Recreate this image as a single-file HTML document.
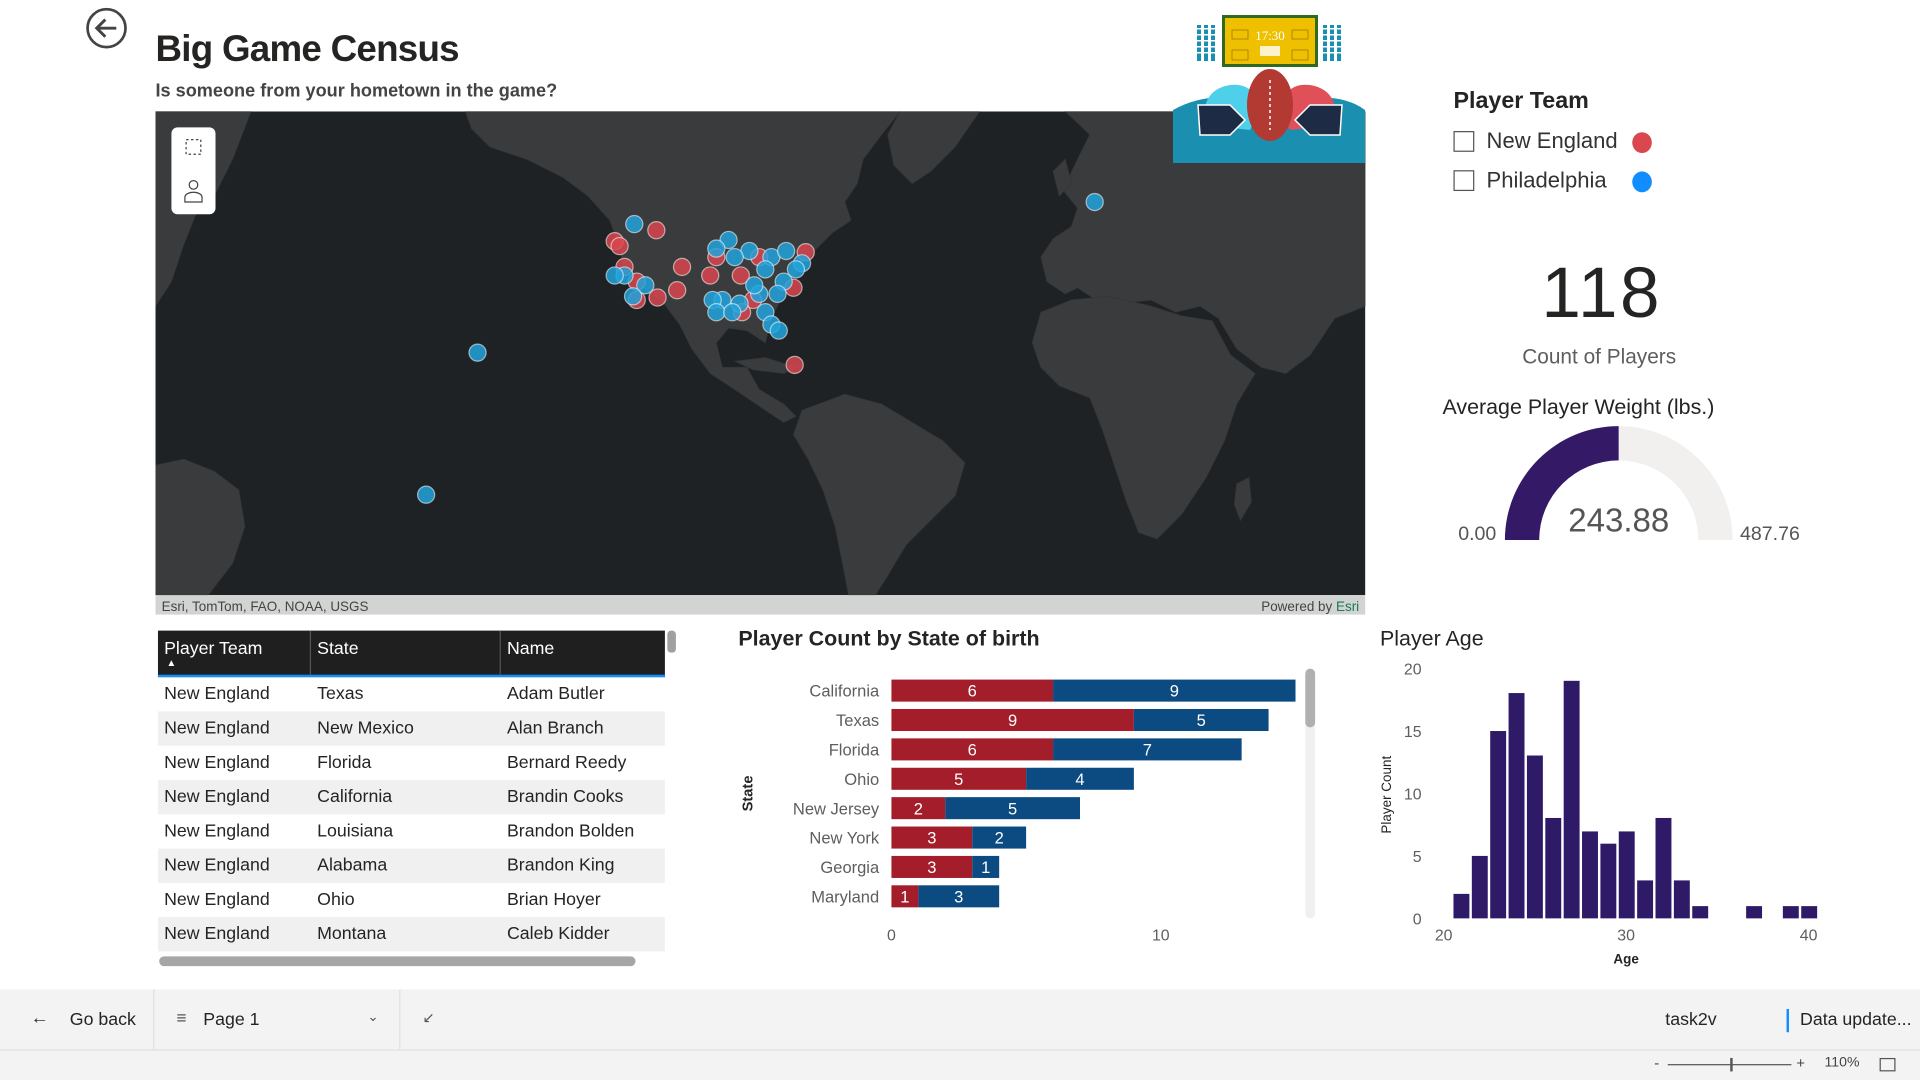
<!DOCTYPE html>
<html><head><meta charset="utf-8"><style>
html,body{margin:0;padding:0;width:1920px;height:1080px;overflow:hidden;background:#fff;font-family:"Liberation Sans",sans-serif;}
#s{position:absolute;left:0;top:0;width:1568px;height:882px;transform:scale(1.2244898);transform-origin:0 0;}
.a{position:absolute;white-space:nowrap;}
.tr{position:absolute;left:129px;width:414px;height:28px;font-size:14.5px;color:#252423;}
.tr span{position:absolute;top:6px;}
</style></head><body>
<div id="s">
<svg class="a" style="left:69px;top:5px" width="36" height="36" viewBox="0 0 36 36"><circle cx="18" cy="18" r="15.5" fill="none" stroke="#444" stroke-width="2.2"/><path d="M26 18H11M17 11l-7 7 7 7" fill="none" stroke="#444" stroke-width="2.4"/></svg>
<div class="a" style="left:127px;top:24px;font-size:30px;font-weight:bold;color:#252423;letter-spacing:-0.6px">Big Game Census</div>
<div class="a" style="left:127px;top:67px;font-size:14.8px;font-weight:bold;color:#444">Is someone from your hometown in the game?</div>

<svg class="a" style="left:127px;top:91px" width="988" height="411" viewBox="127 91 988 411">
<rect x="127" y="91" width="988" height="395" fill="#1e2225"/>
<g fill="#3a3b3c" stroke="#333638" stroke-width="0.6">
<path d="M127 91H205L190 130 175 160 160 175 150 200 140 230 127 250Z"/>
<path d="M127 380L150 375 175 385 195 400 200 430 190 460 170 486H127Z"/>
<path d="M380 91H735L720 110 705 130 700 150 690 165 695 180 680 190 670 200 655 215 640 240 630 260 625 280 610 270 595 268 585 280 590 300 610 300 620 318 640 330 650 340 640 345 625 335 600 318 580 305 565 285 555 265 540 245 525 235 510 220 505 200 498 180 480 160 460 145 430 130 400 120 385 105Z"/>
<path d="M735 91H800L780 120 760 140 745 150 730 135 725 110Z"/>
<path d="M600 295L625 292 650 300 640 305 615 302Z"/>
<path d="M655 335L690 322 720 330 745 345 770 360 788 378 780 405 760 425 740 445 725 470 715 486H693L688 460 682 430 672 400 660 375 648 355Z"/>
<path d="M870 91H1115V250L1090 260 1070 290 1050 305 1030 300 1010 285 995 260 980 250 960 255 940 245 915 248 895 245 880 235 870 240 855 230 850 210 860 195 875 185 880 170 868 155 880 130 890 110Z"/>
<path d="M850 255L875 245 905 242 940 250 965 258 990 262 1005 290 1025 305 1010 330 1000 360 985 390 965 420 945 440 930 435 920 410 910 380 900 350 890 325 865 315 850 300 843 280Z"/>
<path d="M1010 395L1020 390 1022 410 1013 425 1008 412Z"/>
<path d="M860 140L870 130 875 150 865 160Z"/>
</g>
<g stroke="#fff" stroke-opacity="0.55" stroke-width="1" fill-opacity="0.85">
<g fill="#d9474f">
<circle cx="536" cy="188" r="7"/><circle cx="502" cy="197" r="7"/><circle cx="506" cy="201" r="7"/><circle cx="557" cy="218" r="7"/><circle cx="580" cy="225" r="7"/><circle cx="510" cy="218" r="7"/><circle cx="537" cy="243" r="7"/><circle cx="553" cy="237" r="7"/><circle cx="605" cy="225" r="7"/><circle cx="585" cy="210" r="7"/><circle cx="620" cy="210" r="7"/><circle cx="658" cy="206" r="7"/><circle cx="648" cy="235" r="7"/><circle cx="615" cy="245" r="7"/><circle cx="606" cy="255" r="7"/><circle cx="520" cy="245" r="7"/><circle cx="649" cy="298" r="7"/><circle cx="520" cy="230" r="7"/>
</g>
<g fill="#22a3dc">
<circle cx="518" cy="183" r="7"/><circle cx="894" cy="165" r="7"/><circle cx="390" cy="288" r="7"/><circle cx="348" cy="404" r="7"/><circle cx="595" cy="196" r="7"/><circle cx="585" cy="203" r="7"/><circle cx="612" cy="205" r="7"/><circle cx="600" cy="210" r="7"/><circle cx="630" cy="210" r="7"/><circle cx="642" cy="205" r="7"/><circle cx="655" cy="215" r="7"/><circle cx="650" cy="220" r="7"/><circle cx="625" cy="220" r="7"/><circle cx="640" cy="230" r="7"/><circle cx="635" cy="240" r="7"/><circle cx="620" cy="240" r="7"/><circle cx="590" cy="245" r="7"/><circle cx="582" cy="245" r="7"/><circle cx="604" cy="248" r="7"/><circle cx="585" cy="255" r="7"/><circle cx="598" cy="255" r="7"/><circle cx="625" cy="255" r="7"/><circle cx="630" cy="265" r="7"/><circle cx="636" cy="270" r="7"/><circle cx="527" cy="233" r="7"/><circle cx="510" cy="225" r="7"/><circle cx="502" cy="225" r="7"/><circle cx="517" cy="242" r="7"/><circle cx="616" cy="233" r="7"/>
</g></g>
<rect x="127" y="486" width="988" height="16" fill="#d2d3d3"/>
<text x="132" y="499" font-size="11" fill="#444" font-family="Liberation Sans">Esri, TomTom, FAO, NOAA, USGS</text>
<text x="1110" y="499" font-size="11" fill="#444" text-anchor="end" font-family="Liberation Sans">Powered by <tspan fill="#1a7a5a">Esri</tspan></text>
<rect x="140" y="104" width="36" height="71" rx="5" fill="#fff"/>
<rect x="152" y="114" width="12" height="12" fill="none" stroke="#444" stroke-dasharray="2 2"/>
<circle cx="158" cy="151" r="3.5" fill="none" stroke="#444"/><path d="M151 165v-4a7 4 0 0 1 14 0v4z" fill="none" stroke="#444"/>
</svg>

<div class="a" style="left:1187px;top:72px;font-size:19px;font-weight:bold;color:#252423">Player Team</div>
<div class="a" style="left:1187px;top:107px;width:15px;height:15px;border:1px solid #555"></div>
<div class="a" style="left:1214px;top:105px;font-size:18px;color:#333">New England</div>
<div class="a" style="left:1333px;top:108px;width:16px;height:17px;border-radius:50%;background:#d9474f"></div>
<div class="a" style="left:1187px;top:139px;width:15px;height:15px;border:1px solid #555"></div>
<div class="a" style="left:1214px;top:137px;font-size:18px;color:#333">Philadelphia</div>
<div class="a" style="left:1333px;top:140px;width:16px;height:17px;border-radius:50%;background:#118dff"></div>

<div class="a" style="left:1208px;top:206px;width:200px;text-align:center;font-size:58px;color:#252423;letter-spacing:2px">118</div>
<div class="a" style="left:1206px;top:282px;width:200px;text-align:center;font-size:17px;color:#605e5c">Count of Players</div>
<div class="a" style="left:1178px;top:322px;font-size:17.5px;color:#252423">Average Player Weight (lbs.)</div>
<svg class="a" style="left:1180px;top:340px" width="300" height="110" viewBox="1180 340 300 110">
<path d="M1229 441A93 93 0 0 1 1322 348L1322 376A65 65 0 0 0 1257 441Z" fill="#341a66"/>
<path d="M1322 348A93 93 0 0 1 1415 441L1387 441A65 65 0 0 0 1322 376Z" fill="#f1f0ef"/>
<text x="1322" y="434" font-size="27" fill="#555" text-anchor="middle" font-family="Liberation Sans">243.88</text>
<text x="1222" y="441" font-size="16" fill="#555" text-anchor="end" font-family="Liberation Sans">0.00</text>
<text x="1421" y="441" font-size="16" fill="#555" font-family="Liberation Sans">487.76</text>
</svg>

<div class="a" style="left:129px;top:515px;width:414px;height:36px;background:#1f1f1f;border-bottom:2px solid #118dff;color:#fff;font-size:14.5px">
<span class="a" style="left:5px;top:7px">Player Team</span><span class="a" style="left:7px;top:22px;font-size:8px">▲</span>
<span class="a" style="left:130px;top:7px">State</span><span class="a" style="left:285px;top:7px">Name</span>
<div class="a" style="left:124px;top:0;width:1px;height:36px;background:#555"></div><div class="a" style="left:279px;top:0;width:1px;height:36px;background:#555"></div>
</div>
<div class="a" style="left:545px;top:515px;width:7px;height:18px;border-radius:3px;background:#a0a0a0"></div>
<div class="tr" style="top:553px"><span style="left:5px">New England</span><span style="left:130px">Texas</span><span style="left:285px">Adam Butler</span></div>
<div class="tr" style="top:581px;background:#f0f0f0"><span style="left:5px">New England</span><span style="left:130px">New Mexico</span><span style="left:285px">Alan Branch</span></div>
<div class="tr" style="top:609px"><span style="left:5px">New England</span><span style="left:130px">Florida</span><span style="left:285px">Bernard Reedy</span></div>
<div class="tr" style="top:637px;background:#f0f0f0"><span style="left:5px">New England</span><span style="left:130px">California</span><span style="left:285px">Brandin Cooks</span></div>
<div class="tr" style="top:665px"><span style="left:5px">New England</span><span style="left:130px">Louisiana</span><span style="left:285px">Brandon Bolden</span></div>
<div class="tr" style="top:693px;background:#f0f0f0"><span style="left:5px">New England</span><span style="left:130px">Alabama</span><span style="left:285px">Brandon King</span></div>
<div class="tr" style="top:721px"><span style="left:5px">New England</span><span style="left:130px">Ohio</span><span style="left:285px">Brian Hoyer</span></div>
<div class="tr" style="top:749px;background:#f0f0f0"><span style="left:5px">New England</span><span style="left:130px">Montana</span><span style="left:285px">Caleb Kidder</span></div>
<div class="a" style="left:130px;top:781px;width:389px;height:8px;border-radius:4px;background:#a6a6a6"></div>

<div class="a" style="left:603px;top:511px;font-size:17.5px;font-weight:bold;color:#252423">Player Count by State of birth</div>
<div class="a" style="left:596px;top:641px;font-size:12px;font-weight:bold;color:#252423;transform:rotate(-90deg)">State</div>
<div class="a" style="left:1066px;top:546px;width:8px;height:204px;border-radius:4px;background:#f0f0f0"></div>
<div class="a" style="left:1066px;top:546px;width:8px;height:48px;border-radius:4px;background:#b0b0b0"></div>
<svg class="a" style="left:640px;top:550px" width="430" height="230" viewBox="640 550 430 230" font-family="Liberation Sans">
<g font-size="13.5" fill="#605e5c" text-anchor="end">
<text x="718" y="569">California</text><text x="718" y="593">Texas</text><text x="718" y="617">Florida</text><text x="718" y="641">Ohio</text><text x="718" y="665">New Jersey</text><text x="718" y="689">New York</text><text x="718" y="713">Georgia</text><text x="718" y="737">Maryland</text>
</g>
<g fill="#a31e2a">
<rect x="728" y="555" width="132" height="18"/><rect x="728" y="579" width="198" height="18"/><rect x="728" y="603" width="132" height="18"/><rect x="728" y="627" width="110" height="18"/><rect x="728" y="651" width="44" height="18"/><rect x="728" y="675" width="66" height="18"/><rect x="728" y="699" width="66" height="18"/><rect x="728" y="723" width="22" height="18"/>
</g>
<g fill="#0c4a82">
<rect x="860" y="555" width="198" height="18"/><rect x="926" y="579" width="110" height="18"/><rect x="860" y="603" width="154" height="18"/><rect x="838" y="627" width="88" height="18"/><rect x="772" y="651" width="110" height="18"/><rect x="794" y="675" width="44" height="18"/><rect x="794" y="699" width="22" height="18"/><rect x="750" y="723" width="66" height="18"/>
</g>
<g font-size="13.5" fill="#fff" text-anchor="middle">
<text x="794" y="569">6</text><text x="959" y="569">9</text><text x="827" y="593">9</text><text x="981" y="593">5</text><text x="794" y="617">6</text><text x="937" y="617">7</text><text x="783" y="641">5</text><text x="882" y="641">4</text><text x="750" y="665">2</text><text x="827" y="665">5</text><text x="761" y="689">3</text><text x="816" y="689">2</text><text x="761" y="713">3</text><text x="805" y="713">1</text><text x="739" y="737">1</text><text x="783" y="737">3</text>
</g>
<g font-size="13" fill="#605e5c" text-anchor="middle"><text x="728" y="768">0</text><text x="948" y="768">10</text></g>
</svg>

<div class="a" style="left:1127px;top:511px;font-size:17.5px;color:#252423">Player Age</div>
<svg class="a" style="left:1110px;top:535px" width="400" height="260" viewBox="1110 535 400 260" font-family="Liberation Sans">
<g font-size="13" fill="#605e5c" text-anchor="end"><text x="1161" y="551">20</text><text x="1161" y="602">15</text><text x="1161" y="653">10</text><text x="1161" y="704">5</text><text x="1161" y="755">0</text></g>
<text transform="translate(1136 649) rotate(-90)" font-size="11" fill="#252423" text-anchor="middle">Player Count</text>
<g fill="#2e1a66">
<rect x="1187" y="730" width="13" height="20"/><rect x="1202" y="699" width="13" height="51"/><rect x="1217" y="597" width="13" height="153"/><rect x="1232" y="566" width="13" height="184"/><rect x="1247" y="617" width="13" height="133"/><rect x="1262" y="668" width="13" height="82"/><rect x="1277" y="556" width="13" height="194"/><rect x="1292" y="679" width="13" height="71"/><rect x="1307" y="689" width="13" height="61"/><rect x="1322" y="679" width="13" height="71"/><rect x="1337" y="719" width="13" height="31"/><rect x="1352" y="668" width="13" height="82"/><rect x="1367" y="719" width="13" height="31"/><rect x="1382" y="740" width="13" height="10"/><rect x="1426" y="740" width="13" height="10"/><rect x="1456" y="740" width="13" height="10"/><rect x="1471" y="740" width="13" height="10"/>
</g>
<g font-size="13" fill="#605e5c" text-anchor="middle"><text x="1179" y="768">20</text><text x="1328" y="768">30</text><text x="1477" y="768">40</text></g>
<text x="1328" y="787" font-size="11" font-weight="bold" fill="#252423" text-anchor="middle">Age</text>
</svg>

<div class="a" style="left:0;top:808px;width:1568px;height:74px;background:#f3f3f3"></div>
<div class="a" style="left:0;top:857px;width:1568px;height:1px;background:#e0e0e0"></div>
<div class="a" style="left:125px;top:808px;width:1px;height:49px;background:#e0e0e0"></div>
<div class="a" style="left:326px;top:808px;width:1px;height:49px;background:#e0e0e0"></div>
<div class="a" style="left:25px;top:823px;font-size:15px;color:#333">&#8592;</div>
<div class="a" style="left:57px;top:825px;font-size:14.5px;color:#252423">Go back</div>
<div class="a" style="left:144px;top:823px;font-size:14px;color:#555">&#8801;</div>
<div class="a" style="left:166px;top:825px;font-size:14.5px;color:#252423">Page 1</div>
<div class="a" style="left:300px;top:824px;font-size:11px;color:#555">&#8964;</div>
<div class="a" style="left:345px;top:824px;font-size:12px;color:#555">&#8601;</div>
<div class="a" style="left:1360px;top:825px;font-size:14.5px;color:#252423">task2v</div>
<div class="a" style="left:1459px;top:824px;width:2px;height:19px;background:#118dff"></div>
<div class="a" style="left:1470px;top:825px;font-size:14.5px;color:#252423">Data update...</div>
<div class="a" style="left:1351px;top:861px;font-size:12px;color:#444">-</div>
<div class="a" style="left:1362px;top:869px;width:101px;height:1px;background:#555"></div>
<div class="a" style="left:1413px;top:864px;width:2px;height:11px;background:#555"></div>
<div class="a" style="left:1467px;top:861px;font-size:12px;color:#444">+</div>
<div class="a" style="left:1490px;top:862px;font-size:11.5px;color:#444">110%</div>
<div class="a" style="left:1535px;top:864px;width:11px;height:9px;border:1px solid #555"></div>
</div>

<svg class="a" style="left:1170px;top:10px" width="200" height="155" viewBox="0 0 200 155">
<g fill="#1b8fb0">
<rect x="27" y="15" width="4" height="36"/><rect x="34" y="15" width="4" height="36"/><rect x="41" y="15" width="4" height="36"/>
<rect x="153" y="15" width="4" height="36"/><rect x="160" y="15" width="4" height="36"/><rect x="167" y="15" width="4" height="36"/>
</g>
<g fill="#fff"><rect x="26" y="18" width="47" height="1.5"/><rect x="26" y="24" width="47" height="1.5"/><rect x="26" y="30" width="47" height="1.5"/><rect x="26" y="36" width="47" height="1.5"/><rect x="26" y="42" width="47" height="1.5"/><rect x="152" y="18" width="20" height="1.5"/><rect x="152" y="24" width="20" height="1.5"/><rect x="152" y="30" width="20" height="1.5"/><rect x="152" y="36" width="20" height="1.5"/><rect x="152" y="42" width="20" height="1.5"/></g>
<rect x="52" y="5" width="96" height="52" fill="#2f6a1e"/>
<rect x="55" y="8" width="90" height="46" fill="#efc000"/>
<text x="100" y="30" font-size="13" fill="#fff" text-anchor="middle" font-family="Liberation Serif">17:30</text>
<rect x="62" y="20" width="16" height="9" fill="none" stroke="#a07a00" stroke-width="0.8"/><rect x="122" y="20" width="16" height="9" fill="none" stroke="#a07a00" stroke-width="0.8"/>
<rect x="62" y="40" width="16" height="10" fill="none" stroke="#a07a00" stroke-width="0.8"/><rect x="122" y="40" width="16" height="10" fill="none" stroke="#a07a00" stroke-width="0.8"/>
<rect x="90" y="36" width="20" height="10" fill="#fff" opacity="0.8"/>
<path d="M3 100Q30 85 60 88L140 88Q175 85 195 100V153H3Z" fill="#1b8fb0"/>
<path d="M35 115Q30 80 60 75Q85 72 90 100L80 120Z" fill="#4fd0ea"/>
<path d="M165 115Q170 80 140 75Q115 72 110 100L120 120Z" fill="#e05058"/>
<path d="M28 95L60 95 75 110 60 125 30 125Z" fill="#1d2b45" stroke="#fff" stroke-width="1.5"/>
<path d="M172 95L140 95 125 110 140 125 170 125Z" fill="#1d2b45" stroke="#fff" stroke-width="1.5"/>
<ellipse cx="100" cy="95" rx="23" ry="36" fill="#b23a32"/>
<path d="M100 70V120" stroke="#fff" stroke-width="1.5" stroke-dasharray="3 3"/>
</svg>
</body></html>
